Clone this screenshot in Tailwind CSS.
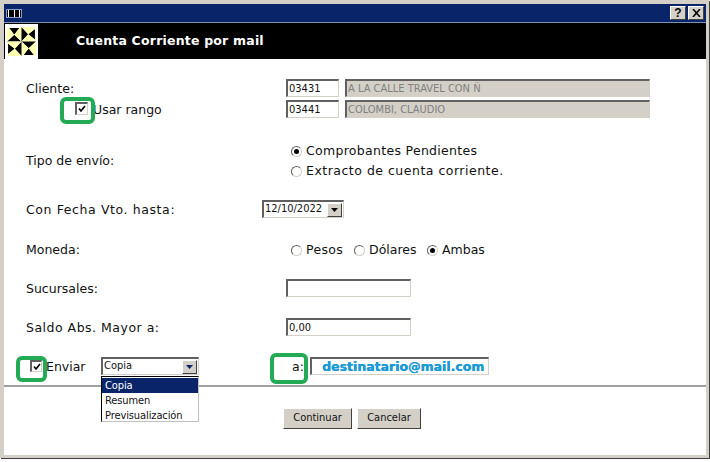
<!DOCTYPE html>
<html lang="es">
<head>
  <meta charset="UTF-8">
  <title>Cuenta Corriente por mail</title>
  <script src="https://cdn.jsdelivr.net/npm/@tailwindcss/browser@4"></script>
</head>
<body class="w-[710px] h-[462px] overflow-hidden bg-white font-['DejaVu_Sans',sans-serif] text-[12.5px] text-[#111]">
  <div class="relative w-[709px] h-[458px] border-l-[4px] border-r-[3px] border-t-[4px] border-b-[3px] border-[#d4d0c8] shadow-[1px_1px_0_#404040] flex flex-col">
    <!-- title bar -->
    <div class="h-[18px] bg-[#0a246a] flex items-center justify-between pl-[2px] pr-[2px] shrink-0">
      <div class="flex h-[9px] w-[16px] bg-black border border-[#8899cc] gap-[5px] px-[1px]">
        <span class="w-[1px] bg-white"></span><span class="w-[1px] bg-white"></span><span class="w-[1px] bg-white"></span>
      </div>
      <div class="flex gap-[2px]">
        <div class="w-[16px] h-[14px] bg-[#d4d0c8] border border-t-white border-l-white border-b-[#404040] border-r-[#404040] flex items-center justify-center font-['Liberation_Sans',sans-serif] font-bold text-[12px] text-black leading-none">?</div>
        <div class="w-[16px] h-[14px] bg-[#d4d0c8] border border-t-white border-l-white border-b-[#404040] border-r-[#404040] flex items-center justify-center">
          <svg width="9" height="8" viewBox="0 0 9 8"><path d="M1 0 L8 8 M8 0 L1 8" stroke="#000" stroke-width="1.6"/></svg>
        </div>
      </div>
    </div>
    <!-- header -->
    <div class="h-[37px] bg-black flex items-center shrink-0 border-t border-[#8090b0]">
      <div class="w-[33px] h-[35px] bg-white ml-[1px] flex items-center justify-center">
        <svg width="31" height="31" viewBox="0 0 30 30">
          <g><path d="M1 15 L15 15 L8 8.5 Z M8 8.5 L3 2 L13 2 Z" fill="#000"/><path d="M1 15 L8 8.5 L3 2 L1 2 Z M15 15 L8 8.5 L13 2 L15 2 Z" fill="#ffffb0"/></g>
          <g transform="rotate(90 15 15)"><path d="M1 15 L15 15 L8 8.5 Z M8 8.5 L3 2 L13 2 Z" fill="#000"/><path d="M1 15 L8 8.5 L3 2 L1 2 Z M15 15 L8 8.5 L13 2 L15 2 Z" fill="#ffffb0"/></g>
          <g transform="rotate(180 15 15)"><path d="M1 15 L15 15 L8 8.5 Z M8 8.5 L3 2 L13 2 Z" fill="#000"/><path d="M1 15 L8 8.5 L3 2 L1 2 Z M15 15 L8 8.5 L13 2 L15 2 Z" fill="#ffffb0"/></g>
          <g transform="rotate(270 15 15)"><path d="M1 15 L15 15 L8 8.5 Z M8 8.5 L3 2 L13 2 Z" fill="#000"/><path d="M1 15 L8 8.5 L3 2 L1 2 Z M15 15 L8 8.5 L13 2 L15 2 Z" fill="#ffffb0"/></g>
        </svg>
      </div>
      <span class="ml-[38px] text-white font-bold text-[12.5px] tracking-[0.2px]">Cuenta Corriente por mail</span>
    </div>
    <!-- form -->
    <div class="relative flex-1 pl-[22px]">
      <div class="h-[21px] mt-[18px] flex items-center">
        <span class="w-[260px] pt-[3px]">Cliente:</span>
        <input value="03431" class="h-[18px] w-[53px] px-[1px] font-['DejaVu_Sans_Condensed','Liberation_Sans',sans-serif] text-[11px] bg-white border border-t-2 border-l-2 border-t-[#606060] border-l-[#606060] border-b-[#d4d0c8] border-r-[#d4d0c8]">
        <input value="A LA CALLE TRAVEL CON Ñ" class="ml-[6px] h-[18px] w-[305px] px-[1px] font-['DejaVu_Sans_Condensed','Liberation_Sans',sans-serif] text-[11px] text-[#808080] bg-[#d4d0c8] border border-t-2 border-l-2 border-t-[#606060] border-l-[#606060] border-b-[#d4d0c8] border-r-[#d4d0c8]">
      </div>
      <div class="h-[21px] flex items-center">
        <span class="w-[260px] pl-[49px] flex items-center">
          <span class="w-[13px] h-[13px] bg-white border border-t-2 border-l-2 border-t-[#606060] border-l-[#606060] border-b-[#d4d0c8] border-r-[#d4d0c8] flex items-center justify-center">
            <svg width="8" height="8" viewBox="0 0 8 8"><path d="M1 3.5 L3 6 L7 1" fill="none" stroke="#000" stroke-width="1.7"/></svg>
          </span>
          <span class="ml-[5px] pt-[3px]">Usar rango</span>
        </span>
        <input value="03441" class="h-[18px] w-[53px] px-[1px] font-['DejaVu_Sans_Condensed','Liberation_Sans',sans-serif] text-[11px] bg-white border border-t-2 border-l-2 border-t-[#606060] border-l-[#606060] border-b-[#d4d0c8] border-r-[#d4d0c8]">
        <input value="COLOMBI, CLAUDIO" class="ml-[6px] h-[18px] w-[305px] px-[1px] font-['DejaVu_Sans_Condensed','Liberation_Sans',sans-serif] text-[11px] text-[#808080] bg-[#d4d0c8] border border-t-2 border-l-2 border-t-[#606060] border-l-[#606060] border-b-[#d4d0c8] border-r-[#d4d0c8]">
      </div>
      <div class="h-[40px] mt-[22px] flex items-center">
        <span class="w-[260px]">Tipo de envío:</span>
        <div class="flex flex-col pl-[5px]">
          <label class="h-[20px] flex items-center gap-[4px] tracking-[0.3px]">
            <span class="w-[11px] h-[11px] rounded-full bg-white border border-t-[#606060] border-l-[#606060] border-b-[#d4d0c8] border-r-[#d4d0c8] flex items-center justify-center"><span class="w-[5px] h-[5px] rounded-full bg-black"></span></span>
            Comprobantes Pendientes
          </label>
          <label class="h-[20px] flex items-center gap-[4px] tracking-[0.5px]">
            <span class="w-[11px] h-[11px] rounded-full bg-white border border-t-[#606060] border-l-[#606060] border-b-[#d4d0c8] border-r-[#d4d0c8]"></span>
            Extracto de cuenta corriente.
          </label>
        </div>
      </div>
      <div class="h-[18px] mt-[19px] flex items-center">
        <span class="w-[236px] pt-[2px] tracking-[0.6px]">Con Fecha Vto. hasta:</span>
        <div class="h-[18px] w-[82px] flex items-center justify-between bg-white border border-t-2 border-l-2 border-t-[#606060] border-l-[#606060] border-b-[#d4d0c8] border-r-[#d4d0c8] font-['DejaVu_Sans_Condensed','Liberation_Sans',sans-serif] text-[11px] pl-[1px]">
          12/10/2022
          <span class="w-[15px] h-[14px] mr-[1px] bg-[#d4d0c8] border border-t-white border-l-white border-b-[#404040] border-r-[#404040] flex items-center justify-center">
            <svg width="7" height="4" viewBox="0 0 7 4"><path d="M0 0 H7 L3.5 4 Z" fill="#000"/></svg>
          </span>
        </div>
      </div>
      <div class="h-[18px] mt-[23px] flex items-center">
        <span class="w-[265px]">Moneda:</span>
        <label class="w-[63px] flex items-center gap-[4px] tracking-[0.3px]">
          <span class="w-[11px] h-[11px] rounded-full bg-white border border-t-[#606060] border-l-[#606060] border-b-[#d4d0c8] border-r-[#d4d0c8]"></span>Pesos</label>
        <label class="w-[73px] flex items-center gap-[4px]">
          <span class="w-[11px] h-[11px] rounded-full bg-white border border-t-[#606060] border-l-[#606060] border-b-[#d4d0c8] border-r-[#d4d0c8]"></span>Dólares</label>
        <label class="flex items-center gap-[4px]">
          <span class="w-[11px] h-[11px] rounded-full bg-white border border-t-[#606060] border-l-[#606060] border-b-[#d4d0c8] border-r-[#d4d0c8] flex items-center justify-center"><span class="w-[5px] h-[5px] rounded-full bg-black"></span></span>Ambas</label>
      </div>
      <div class="h-[18px] mt-[20px] flex items-center">
        <span class="w-[260px] pt-[2px]">Sucursales:</span>
        <input class="h-[18px] w-[125px] bg-white border border-t-2 border-l-2 border-t-[#606060] border-l-[#606060] border-b-[#d4d0c8] border-r-[#d4d0c8]">
      </div>
      <div class="h-[18px] mt-[21px] flex items-center">
        <span class="w-[260px] pt-[2px] tracking-[0.5px]">Saldo Abs. Mayor a:</span>
        <input value="0,00" class="h-[18px] w-[125px] px-[1px] font-['DejaVu_Sans_Condensed','Liberation_Sans',sans-serif] text-[11px] bg-white border border-t-2 border-l-2 border-t-[#606060] border-l-[#606060] border-b-[#d4d0c8] border-r-[#d4d0c8]">
      </div>
      <div class="h-[18px] mt-[21px] flex items-center">
        <span class="w-[12px] h-[12px] ml-[4px] bg-white border border-t-2 border-l-2 border-t-[#606060] border-l-[#606060] border-b-[#d4d0c8] border-r-[#d4d0c8] flex items-center justify-center">
          <svg width="8" height="8" viewBox="0 0 8 8"><path d="M1 3.5 L3 6 L7 1" fill="none" stroke="#000" stroke-width="1.7"/></svg>
        </span>
        <span class="ml-[4px] w-[55px] pt-[2px]">Enviar</span>
        <div class="h-[18px] w-[98px] flex items-center justify-between bg-white border border-t-2 border-l-2 border-t-[#606060] border-l-[#606060] border-b-[#d4d0c8] border-r-[#d4d0c8] font-['DejaVu_Sans_Condensed','Liberation_Sans',sans-serif] text-[11px] pl-[1px]">
          Copia
          <span class="w-[15px] h-[14px] mr-[1px] bg-[#d4d0c8] border border-t-white border-l-white border-b-[#404040] border-r-[#404040] flex items-center justify-center">
            <svg width="7" height="4" viewBox="0 0 7 4"><path d="M0 0 H7 L3.5 4 Z" fill="#0a246a"/></svg>
          </span>
        </div>
        <span class="ml-[93px] w-[18px] pt-[2px]">a:</span>
        <div class="h-[18px] w-[179px] border border-t-2 border-l-2 border-t-[#606060] border-l-[#606060] border-b-[#d4d0c8] border-r-[#d4d0c8] pl-[10px] font-bold text-[12.5px] text-[#1c9ad6] leading-[16px] [text-shadow:0.4px_0_0_#1c9ad6]">destinatario@mail.com</div>
      </div>
      <hr class="mt-[10px] -ml-[22px] border-t-[2px] border-[#a0a0a0]">
      <div class="mt-[21px] pl-[257px] flex gap-[5px] font-['DejaVu_Sans_Condensed','Liberation_Sans',sans-serif] text-[11px]">
        <button class="h-[21px] w-[69px] bg-[#d4d0c8] border border-t-white border-l-white border-b-[#404040] border-r-[#404040]">Continuar</button>
        <button class="h-[21px] w-[64px] bg-[#d4d0c8] border border-t-white border-l-white border-b-[#404040] border-r-[#404040]">Cancelar</button>
      </div>

      <!-- open dropdown -->
      <ul class="absolute left-[97px] top-[317px] w-[98px] h-[46px] pt-[1px] bg-white border border-t-black border-l-black border-b-[#c0c0c0] border-r-[#c0c0c0] font-['DejaVu_Sans_Condensed','Liberation_Sans',sans-serif] text-[11px] tracking-[-0.1px] leading-[15px]">
        <li class="bg-[#0a246a] text-white pl-[3px]">Copia</li>
        <li class="pl-[3px]">Resumen</li>
        <li class="pl-[3px]">Previsualización</li>
      </ul>
      <!-- green highlights -->
      <div class="absolute left-[56px] top-[38px] w-[35px] h-[27px] border-[4px] border-[#22aa55] rounded-[6px]"></div>
      <div class="absolute left-[12px] top-[297px] w-[31px] h-[26px] border-[4px] border-[#22aa55] rounded-[6px]"></div>
      <div class="absolute left-[266px] top-[294px] w-[38px] h-[31px] border-[4px] border-[#22aa55] rounded-[6px]"></div>
    </div>
  </div>
</body>
</html>
